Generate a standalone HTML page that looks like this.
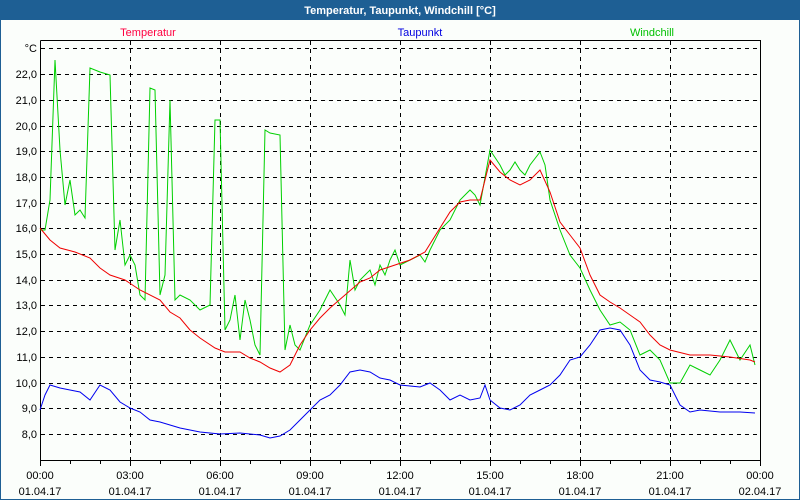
<!DOCTYPE html>
<html><head><meta charset="utf-8"><style>
body{margin:0;width:800px;height:500px;overflow:hidden;background:#1e5f94}
svg{display:block}
text{font-family:"Liberation Sans",sans-serif;font-size:11px}
</style></head><body>
<svg width="800" height="500" viewBox="0 0 800 500">
<rect x="0" y="0" width="800" height="500" fill="#1e5f94"/>
<rect x="1" y="20" width="798" height="479" fill="#fbfefb"/>
<text x="400" y="14" fill="#fff" font-weight="bold" font-size="12" text-anchor="middle">Temperatur, Taupunkt, Windchill [°C]</text>
<text x="148" y="36" fill="#ff0040" text-anchor="middle">Temperatur</text>
<text x="420" y="36" fill="#0000e0" text-anchor="middle">Taupunkt</text>
<text x="652" y="36" fill="#00c000" text-anchor="middle">Windchill</text>
<g stroke="#000" stroke-dasharray="4,4" stroke-width="1">
<path d="M41 48.5H760M41 74.5H760M41 100.5H760M41 126.5H760M41 151.5H760M41 177.5H760M41 203.5H760M41 228.5H760M41 254.5H760M41 280.5H760M41 305.5H760M41 331.5H760M41 357.5H760M41 383.5H760M41 408.5H760M41 434.5H760"/>
<path d="M130.5 41V460M220.5 41V460M310.5 41V460M400.5 41V460M490.5 41V460M580.5 41V460M670.5 41V460"/>
</g>
<path d="M40.5 40.5H760.5V460.5M40.5 40.5V460.5H760.5" stroke="#000" fill="none"/>
<path d="M40.5 460V466M70.5 460V464M100.5 460V464M130.5 460V466M160.5 460V464M190.5 460V464M220.5 460V466M250.5 460V464M280.5 460V464M310.5 460V466M340.5 460V464M370.5 460V464M400.5 460V466M430.5 460V464M460.5 460V464M490.5 460V466M520.5 460V464M550.5 460V464M580.5 460V466M610.5 460V464M640.5 460V464M670.5 460V466M700.5 460V464M730.5 460V464M760.5 460V466" stroke="#000"/>
<g text-anchor="end" fill="#000">
<text x="37" y="52">°C</text><text x="37" y="78">22,0</text><text x="37" y="104">21,0</text><text x="37" y="130">20,0</text><text x="37" y="155">19,0</text><text x="37" y="181">18,0</text><text x="37" y="207">17,0</text><text x="37" y="232">16,0</text><text x="37" y="258">15,0</text><text x="37" y="284">14,0</text><text x="37" y="309">13,0</text><text x="37" y="335">12,0</text><text x="37" y="361">11,0</text><text x="37" y="387">10,0</text><text x="37" y="412">9,0</text><text x="37" y="438">8,0</text>
</g>
<g text-anchor="middle" fill="#000">
<text x="40" y="479">00:00</text><text x="40" y="495">01.04.17</text>
<text x="130" y="479">03:00</text><text x="130" y="495">01.04.17</text>
<text x="220" y="479">06:00</text><text x="220" y="495">01.04.17</text>
<text x="310" y="479">09:00</text><text x="310" y="495">01.04.17</text>
<text x="400" y="479">12:00</text><text x="400" y="495">01.04.17</text>
<text x="490" y="479">15:00</text><text x="490" y="495">01.04.17</text>
<text x="580" y="479">18:00</text><text x="580" y="495">01.04.17</text>
<text x="670" y="479">21:00</text><text x="670" y="495">01.04.17</text>
<text x="760" y="479">00:00</text><text x="760" y="495">02.04.17</text>
</g>
<polyline fill="none" stroke="#0000f0" points="40,410 45,395 50,385 60,388 70,390 80,392 90,400 100,385 110,390 120,402 130,408 140,412 150,420 160,422 170,425 180,428 200,432 220,434 240,433 260,435 270,438 280,436 290,430 300,420 310,410 320,400 330,395 340,385 350,372 360,370 370,372 380,378 390,380 400,385 420,387 430,383 440,390 450,400 460,395 470,400 480,398 485,385 490,400 500,408 510,410 520,405 530,395 540,390 550,385 560,375 570,360 580,357 590,345 600,330 610,328 620,330 630,345 640,370 650,380 660,382 670,385 680,405 690,412 700,410 720,412 740,412 755,413"/>
<polyline fill="none" stroke="#00d000" points="40,230 45,230 50,200 55,60 60,150 65,205 70,180 75,215 80,210 85,218 90,68 100,72 110,75 115,250 120,220 125,265 130,255 135,265 140,295 145,300 150,88 155,90 160,295 165,275 170,100 175,300 180,295 190,300 200,310 210,305 215,120 220,120 225,330 230,320 235,295 240,340 245,300 250,320 255,345 260,355 265,130 270,133 280,135 285,350 290,325 295,345 300,350 310,325 320,310 330,290 340,305 345,315 350,260 355,290 360,280 370,270 375,285 380,265 385,275 390,260 395,250 400,265 410,260 420,255 425,262 430,250 440,230 450,220 460,200 470,190 475,195 480,205 490,150 500,165 505,175 510,170 515,162 520,170 525,175 530,165 540,152 545,165 550,200 560,230 570,255 580,268 590,290 600,310 610,325 620,322 630,330 640,355 650,350 660,360 670,383 680,383 690,365 700,370 710,375 720,360 730,340 740,360 750,345 755,365"/>
<polyline fill="none" stroke="#f00000" points="40,228 50,240 60,248 75,252 90,258 100,268 110,275 125,280 140,290 160,300 170,312 180,318 190,330 200,338 215,348 225,352 240,352 250,358 260,362 270,368 280,372 290,365 300,345 310,330 320,318 330,308 345,295 360,282 370,278 380,270 395,265 410,260 425,252 440,228 450,212 460,202 470,200 480,200 490,160 500,172 510,180 520,185 530,180 540,170 550,192 560,222 570,235 580,248 590,275 600,295 610,302 620,308 630,315 640,322 650,335 660,345 670,350 690,355 710,355 730,357 750,360 755,362"/>
</svg>
</body></html>
